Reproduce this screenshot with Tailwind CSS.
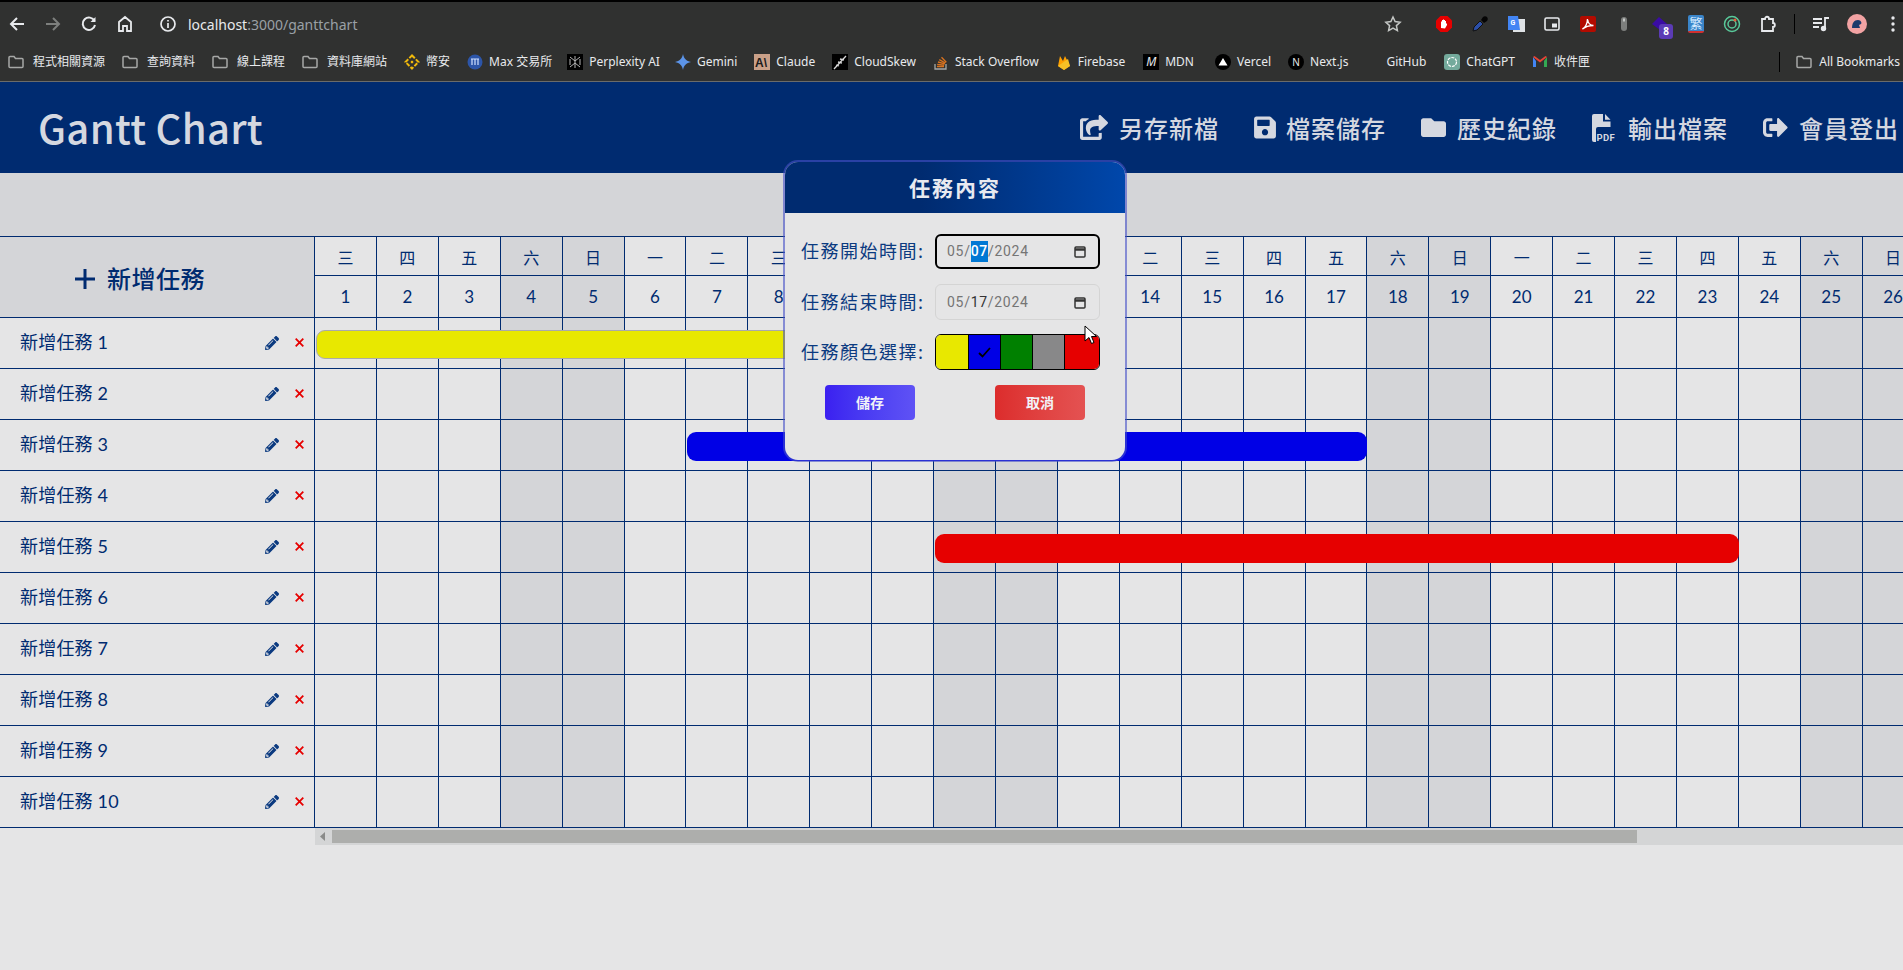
<!DOCTYPE html>
<html lang="zh-Hant">
<head>
  <meta charset="UTF-8" />
  <meta name="viewport" content="width=device-width, initial-scale=1" />
  <title>Gantt Chart</title>
  <script src="https://cdn.jsdelivr.net/npm/@tailwindcss/browser@4"></script>
</head>
<body class="relative h-screen overflow-hidden bg-[#e5e5e6] font-['Lato','Noto_Sans_CJK_TC',sans-serif] text-[#002b70]">

  <!-- browser chrome -->
  <div class="h-[82px] bg-[#303130] border-t-2 border-b border-t-black border-b-[#6a6b6a] font-['Noto_Sans','Noto_Sans_CJK_TC',sans-serif] text-[#e8eaed]">
    <div class="flex items-center h-[44px] pl-[8px]">
      <div class="flex items-center gap-[18px]">
        <svg class="w-[18px] h-[18px]" viewBox="0 0 18 18" fill="none" stroke="#e8eaed" stroke-width="2"><path d="M16 9H3M9 3L3 9l6 6"/></svg>
        <svg class="w-[18px] h-[18px]" viewBox="0 0 18 18" fill="none" stroke="#7d7f7d" stroke-width="2"><path d="M2 9h13M9 3l6 6-6 6"/></svg>
        <svg class="w-[18px] h-[18px]" viewBox="0 0 18 18" fill="none" stroke="#e8eaed" stroke-width="2"><path d="M14.5 6A6.2 6.2 0 1 0 15 10"/><path d="M15.5 2v5h-5" fill="#e8eaed" stroke="none"/></svg>
        <svg class="w-[18px] h-[18px]" viewBox="0 0 18 18" fill="none" stroke="#e8eaed" stroke-width="1.8"><path d="M3 16V7l6-5 6 5v9h-4v-5H7v5z"/></svg>
      </div>
      <svg class="ml-[25px] w-[18px] h-[18px]" viewBox="0 0 18 18" fill="none" stroke="#e8eaed" stroke-width="1.7"><circle cx="9" cy="9" r="7"/><path d="M9 8v5M9 5v1.6"/></svg>
      <div class="ml-[11px] text-[14px]">localhost<span class="text-[#9aa0a6]">:3000/ganttchart</span></div>

      <div class="ml-auto flex items-center">
        <div class="w-[36px] flex justify-center"><svg class="w-[18px] h-[18px]" viewBox="0 0 18 18" fill="none" stroke="#c4c7c5" stroke-width="1.5"><path d="M9 2l2.1 4.6 5 .6-3.7 3.4 1 5L9 13.1 4.600 15.600l1-5L1.900 7.200l5-.6z"/></svg></div>
        <div class="ml-[15px] w-[36px] flex justify-center"><svg class="w-[18px] h-[18px]" viewBox="0 0 18 18"><path d="M5.500 1h7L17 5.500v7L12.500 17h-7L1 12.500v-7z" fill="#e60000"/><path d="M6 13V6.500h1V5h1v-.5h1V5h1v1h1v3l1-1v2l-2 3.500z" fill="#fff"/></svg></div>
        <div class="w-[36px] flex justify-center"><svg class="w-[18px] h-[18px]" viewBox="0 0 18 18"><path d="M2 16l1-4 6-6 3 3-6 6z" fill="#2c4fa8" stroke="#111" stroke-width="1"/><path d="M10 5l2-3c1-1 3-1 4 0s1 3 0 4l-3 2z" fill="#050505"/></svg></div>
        <div class="w-[36px] flex justify-center"><svg class="w-[18px] h-[18px]" viewBox="0 0 18 18"><rect x="6" y="4" width="12" height="13" fill="#dfe3e6"/><path d="M1 1h10l2 14H1z" fill="#4285f4"/><text x="3.500" y="10" font-size="7" font-weight="700" fill="#fff" font-family="Roboto">G</text></svg></div>
        <div class="w-[36px] flex justify-center"><svg class="w-[18px] h-[18px]" viewBox="0 0 18 18" fill="none"><rect x="2" y="3" width="14" height="12" rx="1.500" stroke="#e8eaed" stroke-width="1.600"/><rect x="9" y="8.500" width="5" height="4" fill="#e8eaed"/></svg></div>
        <div class="w-[36px] flex justify-center"><svg class="w-[18px] h-[18px]" viewBox="0 0 18 18"><rect x="1" y="1" width="16" height="16" rx="2" fill="#b30b00"/><path d="M3.500 14c3-1.500 5-6 5-10 .5 4 3 6.500 6 6.500-4 0-8 1-11 3.500z" fill="none" stroke="#fff" stroke-width="1.400"/></svg></div>
        <div class="w-[36px] flex justify-center"><svg class="w-[18px] h-[18px]" viewBox="0 0 18 18"><rect x="6" y="2" width="6" height="14" rx="3" fill="#7d7f7d"/><rect x="8" y="3.500" width="2" height="3" fill="#c4c7c5"/></svg></div>
        <div class="relative w-[36px] flex justify-center"><svg class="w-[18px] h-[18px]" viewBox="0 0 18 18"><path d="M1 9l7-7 8 7-7 6z" fill="#3a0ca3"/></svg><span class="absolute left-[17px] top-[9px] w-[14px] h-[15px] rounded-[3px] bg-[#5b3bb5] text-white text-[10px] leading-[15px] text-center font-bold">8</span></div>
        <div class="w-[36px] flex justify-center"><span class="w-[16px] h-[18px] rounded-[2px] bg-[#3a85c9] border-b-2 border-b-[#d03030] text-[13px] leading-[16px] text-center text-[#d8ecff]">繁</span></div>
        <div class="w-[36px] flex justify-center"><svg class="w-[18px] h-[18px]" viewBox="0 0 18 18" fill="none" stroke="#59c99a" stroke-width="1.500"><circle cx="9" cy="9" r="7.500"/><circle cx="9" cy="9" r="4"/><circle cx="12" cy="5" r="1.500" fill="#e85b3a" stroke="none"/></svg></div>
        <div class="w-[36px] flex justify-center"><svg class="w-[18px] h-[18px]" viewBox="0 0 18 18" fill="none" stroke="#e8eaed" stroke-width="1.800"><path d="M3 4h3c0-3 4-3 4 0h4v4c2.500 0 2.500 4 0 4v4H3z"/></svg></div>
        <div class="ml-[8px] w-px h-[20px] bg-black"></div>
        <div class="ml-[8px] w-[36px] flex justify-center"><svg class="w-[18px] h-[18px]" viewBox="0 0 18 18" fill="none" stroke="#e8eaed" stroke-width="1.800"><path d="M1 4h9M1 8h9M1 12h6M13 13V3h4"/><circle cx="11.500" cy="13.500" r="1.800" fill="#e8eaed"/></svg></div>
        <div class="w-[36px] flex justify-center"><svg class="w-[20px] h-[20px]" viewBox="0 0 20 20"><circle cx="10" cy="10" r="10" fill="#f2a3a3"/><path d="M5 14c0-5 2-8 6-8 3 0 4 3 3 4l-2 1 1 3z" fill="#1d3a6b"/></svg></div>
        <div class="w-[28px] pl-[16px]"><svg class="w-[4px] h-[16px]" viewBox="0 0 4 16" fill="#e8eaed"><circle cx="2" cy="2" r="1.700"/><circle cx="2" cy="8" r="1.700"/><circle cx="2" cy="14" r="1.700"/></svg></div>
      </div>
    </div>

    <div class="flex items-center h-[33px] pl-[8px] pb-[2px] text-[12px] whitespace-nowrap">
      <div class="flex items-center gap-[17px]">
        <div class="flex items-center gap-[9px]"><svg class="w-[16px] h-[16px]" viewBox="0 0 16 16" fill="none" stroke="#a6a8a6" stroke-width="1.500"><path d="M2 2.500h4l1.500 2H14a1 1 0 0 1 1 1v7a1 1 0 0 1-1 1H2a1 1 0 0 1-1-1v-9a1 1 0 0 1 1-1z"/></svg>程式相關資源</div>
        <div class="flex items-center gap-[9px]"><svg class="w-[16px] h-[16px]" viewBox="0 0 16 16" fill="none" stroke="#a6a8a6" stroke-width="1.500"><path d="M2 2.500h4l1.500 2H14a1 1 0 0 1 1 1v7a1 1 0 0 1-1 1H2a1 1 0 0 1-1-1v-9a1 1 0 0 1 1-1z"/></svg>查詢資料</div>
        <div class="flex items-center gap-[9px]"><svg class="w-[16px] h-[16px]" viewBox="0 0 16 16" fill="none" stroke="#a6a8a6" stroke-width="1.500"><path d="M2 2.500h4l1.500 2H14a1 1 0 0 1 1 1v7a1 1 0 0 1-1 1H2a1 1 0 0 1-1-1v-9a1 1 0 0 1 1-1z"/></svg>線上課程</div>
        <div class="flex items-center gap-[9px]"><svg class="w-[16px] h-[16px]" viewBox="0 0 16 16" fill="none" stroke="#a6a8a6" stroke-width="1.500"><path d="M2 2.500h4l1.500 2H14a1 1 0 0 1 1 1v7a1 1 0 0 1-1 1H2a1 1 0 0 1-1-1v-9a1 1 0 0 1 1-1z"/></svg>資料庫網站</div>
        <div class="flex items-center gap-[6px]"><svg class="w-[16px] h-[16px]" viewBox="0 0 16 16" fill="none" stroke="#f0b90b" stroke-width="2"><path d="M8 1.500L14.500 8 8 14.500 1.500 8z" stroke-dasharray="4 1.500"/><rect x="6.800" y="6.800" width="2.400" height="2.400" fill="#f0b90b" stroke="none"/></svg>幣安</div>
        <div class="flex items-center gap-[6px]"><svg class="w-[16px] h-[16px]" viewBox="0 0 16 16"><circle cx="8" cy="8" r="7.500" fill="#2c55a8"/><path d="M4 5h8M5 5v6M8 5v6M11 5v6" stroke="#cfe0ff" stroke-width="1.200"/></svg>Max 交易所</div>
        <div class="flex items-center gap-[6px] -ml-[2px]"><svg class="w-[16px] h-[16px]" viewBox="0 0 16 16"><rect width="16" height="16" fill="#000"/><path d="M8 2v12M3 3l5 4 5-4M3 13l5-4 5 4M3 5v6M13 5v6" stroke="#b5b5b5" stroke-width="1" fill="none"/></svg>Perplexity AI</div>
        <div class="flex items-center gap-[6px] -ml-[2px]"><svg class="w-[16px] h-[16px]" viewBox="0 0 16 16"><path d="M8 0c.8 4.500 3.200 7 8 8-4.800 1-7.200 3.500-8 8-.8-4.500-3.200-7-8-8 4.800-1 7.200-3.500 8-8z" fill="#5c94e8"/></svg>Gemini</div>
        <div class="flex items-center gap-[6px]"><svg class="w-[16px] h-[16px]" viewBox="0 0 16 16"><rect width="16" height="16" fill="#c9a088"/><text x="1" y="13" font-size="12" font-weight="700" fill="#1a1a1a" font-family="Liberation Sans">A\</text></svg>Claude</div>
        <div class="flex items-center gap-[6px]"><svg class="w-[16px] h-[16px]" viewBox="0 0 16 16"><rect width="16" height="16" fill="#000"/><path d="M2 15L14 2M6 8l4 1M4 11l3 1M8 5l4 1" stroke="#d8d8d8" stroke-width="1.300"/></svg>CloudSkew</div>
        <div class="flex items-center gap-[6px]"><svg class="w-[16px] h-[16px]" viewBox="0 0 16 16" fill="none"><path d="M2 10v5h11v-5" stroke="#a6a8a6" stroke-width="1.300"/><path d="M4 12.500h7M4.200 10.300l7 .8M5 8l6.800 1.900M6.300 5.600l6 3.400M8.500 3.300l4.800 4.900" stroke="#d9731f" stroke-width="1.300"/></svg>Stack Overflow</div>
        <div class="flex items-center gap-[6px]"><svg class="w-[16px] h-[16px]" viewBox="0 0 16 16"><path d="M2 12L4 2l3 5 2-5 5 10-6 4z" fill="#ffa000"/><path d="M2 12l6 4 6-4-2-7z" fill="#f6c026"/></svg>Firebase</div>
        <div class="flex items-center gap-[6px] ml-[1px]"><span class="w-[16px] h-[16px] bg-black text-[12px] leading-[16px] italic text-center">M</span>MDN</div>
        <div class="flex items-center gap-[6px] ml-[4px]"><svg class="w-[16px] h-[16px]" viewBox="0 0 16 16"><circle cx="8" cy="8" r="8" fill="#000"/><path d="M8 4l4.500 7.500h-9z" fill="#fff"/></svg>Vercel</div>
        <div class="flex items-center gap-[6px]"><span class="w-[16px] h-[16px] rounded-full bg-black text-[10px] leading-[16px] text-center">N</span>Next.js</div>
        <div class="flex items-center gap-[6px] ml-[21px]">GitHub</div>
        <div class="flex items-center gap-[6px] ml-[1px]"><svg class="w-[16px] h-[16px]" viewBox="0 0 16 16" fill="none"><rect width="16" height="16" rx="3" fill="#74aa9c"/><circle cx="8" cy="8" r="4.500" stroke="#fff" stroke-width="1.200" stroke-dasharray="3 1"/></svg>ChatGPT</div>
        <div class="flex items-center gap-[6px]"><svg class="w-[16px] h-[16px]" viewBox="0 0 16 16"><path d="M1 3v10h3V7z" fill="#4285f4"/><path d="M15 3v10h-3V7z" fill="#34a853"/><path d="M1 3l7 5.500L15 3l-1.500-1L8 6 2.500 2z" fill="#ea4335"/></svg>收件匣</div>
      </div>
      <div class="ml-auto flex items-center">
        <div class="w-px h-[20px] bg-black"></div>
        <div class="ml-[16px] flex items-center gap-[7px] pr-[3px]"><svg class="w-[16px] h-[16px]" viewBox="0 0 16 16" fill="none" stroke="#a6a8a6" stroke-width="1.500"><path d="M2 2.500h4l1.500 2H14a1 1 0 0 1 1 1v7a1 1 0 0 1-1 1H2a1 1 0 0 1-1-1v-9a1 1 0 0 1 1-1z"/></svg>All Bookmarks</div>
      </div>
    </div>
  </div>

  <!-- app header -->
  <header class="flex items-center justify-between h-[91px] bg-[#002b70] pl-[38px] pr-[4px] text-[#d5d8e0] font-['Noto_Sans_CJK_TC','Noto_Sans',sans-serif]">
    <h1 class="text-[40px] font-medium tracking-[0.3px] -mt-[2px]">Gantt Chart</h1>
    <nav class="flex items-center gap-[35px] text-[24px] font-medium tracking-[1px]">
      <a class="flex items-center gap-[11px]"><svg class="w-[28px] h-[25px]" viewBox="0 0 576 512" fill="currentColor"><path d="M568.482 177.448L424.479 313.433C409.3 327.768 384 317.14 384 295.985v-71.963c-144.575.97-205.566 35.113-164.775 171.353 4.483 14.973-12.846 26.567-25.006 17.33C155.252 383.105 120 326.488 120 269.339c0-143.937 117.599-172.5 264-173.312V24.012c0-21.174 25.317-31.768 40.479-17.448l144.003 135.988c10.02 9.463 10.028 25.425 0 34.896zM384 379.128V448H64V128h50.916a11.99 11.99 0 0 0 8.648-3.693c14.953-15.568 32.237-27.89 51.014-37.676C186.708 80.284 182.213 64 168.484 64H48C21.49 64 0 85.49 0 112v352c0 26.51 21.49 48 48 48h352c26.51 0 48-21.49 48-48v-88.806c0-8.288-8.197-13.483-16.011-10.724a71.6 71.6 0 0 1-34.189 3.377c-7.27-1.046-13.8 4.504-13.8 11.281z"/></svg>另存新檔</a>
      <a class="flex items-center gap-[10px]"><svg class="w-[22px] h-[25px]" viewBox="0 0 448 512" fill="currentColor"><path d="M433.941 129.941l-83.882-83.882A48 48 0 0 0 316.118 32H48C21.49 32 0 53.49 0 80v352c0 26.51 21.49 48 48 48h352c26.51 0 48-21.49 48-48V163.882a48 48 0 0 0-14.059-33.941zM224 416c-35.346 0-64-28.654-64-64 0-35.346 28.654-64 64-64s64 28.654 64 64c0 35.346-28.654 64-64 64zm96-304.52V212c0 6.627-5.373 12-12 12H76c-6.627 0-12-5.373-12-12V108c0-6.627 5.373-12 12-12h228.52c3.183 0 6.235 1.264 8.485 3.515l3.48 3.48A11.996 11.996 0 0 1 320 111.48z"/></svg>檔案儲存</a>
      <a class="flex items-center gap-[11px]"><svg class="w-[25px] h-[25px]" viewBox="0 0 512 512" fill="currentColor"><path d="M464 128H272l-64-64H48C21.49 64 0 85.49 0 112v288c0 26.51 21.49 48 48 48h416c26.51 0 48-21.49 48-48V176c0-26.51-21.49-48-48-48z"/></svg>歷史紀錄</a>
      <a class="flex items-center gap-[12px]"><svg class="w-[24px] h-[28px]" viewBox="0 0 24 28"><path d="M2 0h9v7.500h7.500V13H6a2 2 0 0 0-2 2v13H2a2 2 0 0 1-2-2V2a2 2 0 0 1 2-2zM13 0l5.500 5.700H13z" fill="currentColor"/><text x="4.500" y="26.500" font-size="9.500" font-weight="700" letter-spacing="0.300" fill="currentColor" font-family="Roboto">PDF</text></svg>輸出檔案</a>
      <a class="flex items-center gap-[11px]"><svg class="w-[25px] h-[25px]" viewBox="0 0 512 512" fill="currentColor"><path d="M497 273L329 441c-15 15-41 4.5-41-17v-96H152c-13.3 0-24-10.7-24-24v-96c0-13.3 10.7-24 24-24h136V88c0-21.4 25.9-32 41-17l168 168c9.3 9.4 9.3 24.6 0 34zM192 436v-40c0-6.6-5.4-12-12-12H96c-17.7 0-32-14.3-32-32V160c0-17.700 14.3-32 32-32h84c6.6 0 12-5.400 12-12V76c0-6.6-5.4-12-12-12H96c-53 0-96 43-96 96v192c0 53 43 96 96 96h84c6.6 0 12-5.4 12-12z"/></svg>會員登出</a>
    </nav>
  </header>

  <div class="h-[63px] bg-[#d4d5d8]"></div>

  <!-- gantt table -->
  <main class="flex border-t border-[#002b70]">
    <aside class="w-[315px] shrink-0 border-r border-[#002b70]">
      <button class="flex items-center gap-[12px] w-full h-[81px] pt-[4px] pl-[75px] bg-[#d4d5d8] border-b border-[#002b70] text-[24px] font-medium tracking-[0.5px]">
        <svg class="w-[20px] h-[20px]" viewBox="0 0 20 20" fill="#002b70"><rect x="8.500" y="0" width="3" height="20"/><rect x="0" y="8.500" width="20" height="3"/></svg>
        新增任務
      </button>
      <div id="taskList"></div>
    </aside>
    <div class="flex-1 min-w-0 overflow-hidden">
      <div id="weekRow" class="grid grid-cols-[repeat(31,61.92px)] h-[39px] border-b border-[#002b70]"></div>
      <div id="dayRow" class="grid grid-cols-[repeat(31,61.92px)] h-[42px] border-b border-[#002b70]"></div>
      <div id="chartRows"></div>
    </div>
  </main>

  <!-- horizontal scrollbar -->
  <div class="ml-[315px] flex items-center h-[17px] bg-[#d4d5d6]">
    <svg class="ml-[5px] w-[5px] h-[9px]" viewBox="0 0 5 9" fill="#8a8b8a"><path d="M5 0v9L0 4.500z"/></svg>
    <div class="ml-[7px] w-[1305px] h-[13px] bg-[#adaeac]"></div>
  </div>

  <!-- task dialog -->
  <div class="absolute z-20 left-[785px] top-[162px] w-[340px] h-[298px] rounded-[13px] overflow-hidden bg-[#e5e5e6] shadow-[0_0_0_2px_rgba(70,80,200,0.6)]">
    <div class="flex items-center justify-center h-[51px] bg-linear-to-r from-[#002b70] from-40% to-[#0047ab] text-[#e8eaf0] text-[21px] font-bold tracking-[2px] font-['Noto_Sans_CJK_TC',sans-serif]">任務內容</div>
    <div class="pt-[21px] pl-[14px] flex flex-col gap-[15px] text-[18px] tracking-[1.500px] text-[#0b3a80] font-['Noto_Sans_CJK_TC',sans-serif]">
      <label class="flex items-center h-[35px]">
        <span class="w-[136px] pl-[2px] pb-[2px] whitespace-nowrap">任務開始時間:</span>
        <div class="flex items-center w-[165px] h-[35px] pl-[10px] pr-[12px] rounded-[6px] border-2 border-black text-[14px] font-normal tracking-[0.7px] text-[#757575] font-['Roboto',sans-serif]">
          05/<span class="bg-[#0078d4] text-white font-medium">07</span>/2024
          <svg class="ml-auto w-[12px] h-[13px]" viewBox="0 0 12 13" fill="none" stroke="#333" stroke-width="1.500"><rect x="1" y="2" width="10" height="10" rx="1"/><path d="M1 4.500h10" stroke-width="2.500"/></svg>
        </div>
      </label>
      <label class="flex items-center h-[36px]">
        <span class="w-[136px] pl-[2px] pb-[2px] whitespace-nowrap">任務結束時間:</span>
        <div class="flex items-center w-[165px] h-[36px] pl-[11px] pr-[13px] rounded-[6px] border border-[#d4d4d4] text-[14px] font-normal tracking-[0.7px] text-[#757575] font-['Roboto',sans-serif]">
          05/<span class="text-[#333]">17</span>/2024
          <svg class="ml-auto w-[12px] h-[13px]" viewBox="0 0 12 13" fill="none" stroke="#333" stroke-width="1.500"><rect x="1" y="2" width="10" height="10" rx="1"/><path d="M1 4.500h10" stroke-width="2.500"/></svg>
        </div>
      </label>
      <div class="flex items-center h-[36px] -mt-[1px]">
        <span class="w-[136px] pl-[2px] pb-[2px] whitespace-nowrap">任務顏色選擇:</span>
        <div class="flex w-[165px] h-[36px] rounded-[6px] overflow-hidden border border-black">
          <div class="w-[33px] bg-[#e8e800] border-r border-black"></div>
          <div class="flex items-center justify-center w-[32px] bg-[#0000e6] border-r border-black">
            <svg class="w-[13px] h-[11px]" viewBox="0 0 13 11" fill="none" stroke="#000" stroke-width="1.800"><path d="M1 6l3.500 3.500L12 1"/></svg>
          </div>
          <div class="w-[32px] bg-[#008000] border-r border-black"></div>
          <div class="w-[32px] bg-[#888889] border-r border-black"></div>
          <div class="flex-1 bg-[#e60000]"></div>
        </div>
      </div>
    </div>
    <div class="flex gap-[80px] pl-[40px] pt-[15px] text-[14px] font-bold text-[#f2f2f8] font-['Noto_Sans_CJK_TC',sans-serif]">
      <button class="w-[90px] h-[35px] rounded-[4px] bg-linear-to-r from-[#3b1ff0] to-[#5f52f5]">儲存</button>
      <button class="w-[90px] h-[35px] rounded-[4px] bg-linear-to-r from-[#dc2c2c] to-[#e45252]">取消</button>
    </div>
  </div>

  <!-- mouse pointer -->
  <svg class="absolute z-30 left-[1084px] top-[325px] w-[13px] h-[20px]" viewBox="0 0 13 20"><path d="M1 1v15l4-3.500 2.500 6 2.500-1-2.500-6H12.500z" fill="#fff" stroke="#000" stroke-width="1"/></svg>

  <script>
    const weekNames = ['日', '一', '二', '三', '四', '五', '六'];
    const days = Array.from({ length: 31 }, (_, i) => i + 1);
    const isWeekend = d => [0, 6].includes((d + 2) % 7);
    const weekendBg = d => (isWeekend(d) ? 'bg-[#d4d5d8]' : '');

    // bars: row index -> first day, last day, colour
    const bars = {
      1: { from: 1, to: 10, cls: 'bg-[#e8e800] border border-[#aaaaaa]' },
      3: { from: 7, to: 17, cls: 'bg-[#0000e6]' },
      5: { from: 11, to: 23, cls: 'bg-[#e60000]' }
    };

    document.getElementById('weekRow').innerHTML = days.map(d =>
      `<div class="flex items-center justify-center pt-[4px] border-r border-[#002b70] text-[16px] ${weekendBg(d)}">${weekNames[(d + 2) % 7]}</div>`
    ).join('');

    document.getElementById('dayRow').innerHTML = days.map(d =>
      `<div class="flex items-center justify-center border-r border-[#002b70] text-[17px] ${weekendBg(d)}">${d}</div>`
    ).join('');

    const pencil = '<svg class="w-[14px] h-[14px]" viewBox="0 0 512 512" fill="#0b3a80"><path d="M497.9 142.1l-46.1 46.1c-4.7 4.7-12.3 4.7-17 0l-111-111c-4.7-4.7-4.7-12.3 0-17l46.1-46.1c18.7-18.7 49.1-18.7 67.9 0l60.1 60.1c18.8 18.7 18.8 49.1 0 67.9zM284.2 99.8L21.6 362.4.4 483.9c-2.9 16.4 11.4 30.6 27.8 27.8l121.5-21.3 262.6-262.6c4.7-4.7 4.7-12.3 0-17l-111-111c-4.8-4.7-12.4-4.7-17.1 0zM124.1 339.9c-5.5-5.5-5.5-14.3 0-19.8l154-154c5.5-5.5 14.3-5.5 19.8 0s5.5 14.3 0 19.8l-154 154c-5.5 5.5-14.3 5.5-19.8 0zM88 424h48v36.3l-64.5 11.3-31.1-31.1L51.7 376H88v48z"/></svg>';
    const cross = '<svg class="w-[9px] h-[9px]" viewBox="0 0 9 9" stroke="#e60000" stroke-width="1.800"><path d="M.7.7l7.600 7.600M8.300.7L.7 8.300"/></svg>';

    let taskHtml = '';
    let chartHtml = '';
    for (let row = 1; row <= 10; row++) {
      taskHtml += `<div class="flex items-center h-[51px] pl-[20px] pr-[10px] pb-[1px] border-b border-[#002b70] text-[18px] tracking-[0.2px]">
        <span>新增任務 ${row}</span>
        <span class="ml-auto flex items-center gap-[16px]">${pencil}${cross}</span>
      </div>`;

      const bar = bars[row];
      const barHtml = bar
        ? `<div class="row-start-1 z-10 self-start h-[29px] mt-[12px] ml-[1px] rounded-[9px] ${bar.cls}" style="grid-column: ${bar.from} / ${bar.to + 1}"></div>`
        : '';
      const cells = days.map(d => `<div class="row-start-1 border-r border-[#002b70] ${weekendBg(d)}" style="grid-column: ${d}"></div>`).join('');
      chartHtml += `<div class="grid grid-cols-[repeat(31,61.92px)] h-[51px] border-b border-[#002b70]">${barHtml}${cells}</div>`;
    }
    document.getElementById('taskList').innerHTML = taskHtml;
    document.getElementById('chartRows').innerHTML = chartHtml;
  </script>
</body>
</html>
